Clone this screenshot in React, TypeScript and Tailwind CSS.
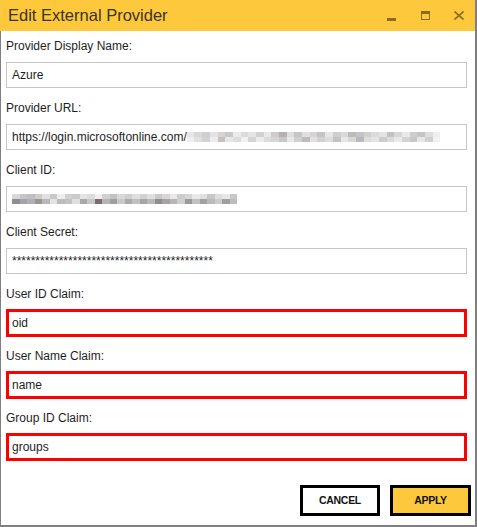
import React from "react";

const URL_BLUR = [
  ["#e6e6e6", "#d8d8d8", "#cfcfd2", "#e2e2e2", "#d6d3d3", "#c9c9cc", "#ebebeb", "#dcdcdc", "#e4e4e4", "#d0d0d0", "#e8e8e8", "#cccccc", "#b6b0b0", "#dedede", "#c6c6c9", "#e0e0e0", "#d4d4d4", "#c8c2c2", "#e6e6e6", "#cfcfcf", "#d9d9d9", "#bcbcbc", "#c4c4c9", "#d0d0d0", "#dadada", "#e3e3e3", "#c2c2c5", "#d7d7d7", "#e9e9e9", "#cdcdcd", "#c5c5c5", "#dddddd", "#eeeeee"],
  ["#efefef", "#e0e0e0", "#d3d3d6", "#ececec", "#c8c0c0", "#e6e6e6", "#dcdcdc", "#f0f0f0", "#d4d4d4", "#ebebeb", "#dcdcdc", "#d7d4d4", "#c8c8cb", "#e8e8e8", "#d0d0d0", "#c0baba", "#e1e1e1", "#d2d2d2", "#dddddd", "#c3c3c6", "#e7e7e7", "#d8d8d8", "#b9b9bd", "#dddddd", "#e4e4e4", "#cccccc", "#dbdbdb", "#eaeaea", "#d3d3d3", "#c8c8cc", "#e6e6e6", "#d1d1d1", "#f2f2f2"],
];

const ID_BLUR = [
  ["#d8d8dc", "#c5c5c8", "#bfbfc2", "#cdcdcd", "#e0e0e0", "#c9c9c9", "#eeeeee", "#d0d0d4", "#cacaca", "#e4e4e4", "#dcdcdc", "#eeeeee", "#cfcfd4", "#c6c1c1", "#d9d9d9", "#cfcfcf", "#e3dede", "#d2d2d2", "#dfdfdf", "#c9c9c9", "#d7d7d7", "#e9e9e9", "#cccccc", "#d6d6d6", "#e8e8e8", "#dfdfdf", "#c6c6c6", "#dddddd", "#e7e7e7", "#c8c8c8"],
  ["#8d8d95", "#a3a3a8", "#b0b0b4", "#9b9790", "#b8b8bc", "#e3e3e3", "#bcbcbc", "#c3c3c3", "#e0e0e0", "#a8a8a8", "#c7c7cb", "#7a6d6d", "#b4b4ba", "#a0a0a0", "#c9c9cc", "#ababae", "#c0c0c0", "#a6a6a6", "#b9b9b9", "#8e8e8e", "#a9a2a2", "#b7b7b7", "#cfcfcf", "#9b9b9f", "#c1c1c1", "#a0a0a5", "#b9b9b9", "#cbcbcb", "#9d9da2", "#bcbcbc"],
];

function Blur({ rows, cell }: { rows: string[][]; cell: number }) {
  return (
    <span className="inline-flex shrink-0 flex-col align-middle">
      {rows.map((row, i) => (
        <span key={i} className="flex">
          {row.map((c, j) => (
            <span key={j} className="shrink-0" style={{ backgroundColor: c, width: cell, height: 5 }} />
          ))}
        </span>
      ))}
    </span>
  );
}

function Field({ label, children, highlight = false }: { label: string; children: React.ReactNode; highlight?: boolean }) {
  return (
    <div className="flex flex-col">
      <div className="h-4 leading-4 text-[12px] text-[#1e1e1e]">{label}</div>
      {highlight ? (
        <div className="mt-[7px] -mb-[1px] flex h-[28px] items-center border-[3px] border-[#ff0000] bg-white pl-[3px] text-[12px] text-[#1e1e1e]">
          {children}
        </div>
      ) : (
        <div className="mt-2 flex h-[26px] items-center overflow-hidden border border-[#c6c6c6] bg-white pl-[5px] text-[12px] text-[#1e1e1e]">
          {children}
        </div>
      )}
    </div>
  );
}

export default function App() {
  return (
    <div className="flex h-[527px] w-[477px] flex-col bg-white" style={{ fontFamily: '"Liberation Sans", Arial, sans-serif' }}>
      <div className="flex h-[31px] shrink-0 items-center border-r-2 border-[#7f7f7f] bg-[#fec83c] pl-2">
        <span className="text-[16.5px] leading-none text-[#3a3520]">Edit External Provider</span>
        <div className="ml-auto flex items-center">
          <div className="mr-[25px] mt-[7px] h-[3px] w-[9px] bg-[#8a6c1e]" />
          <div className="mr-[24px] h-[9px] w-[9px] border border-t-[3px] border-[#8a6c1e]" />
          <svg width="10" height="9" viewBox="0 0 10 9" className="mr-[11px]">
            <path d="M0.5 0.5 L9.5 8.5 M9.5 0.5 L0.5 8.5" stroke="#8a6c1e" strokeWidth="1.6" />
          </svg>
        </div>
      </div>
      <div className="flex flex-1 flex-col border-b-2 border-l border-r-2 border-[#7f7f7f] pl-[5px] pr-[8px] pt-[7px]">
        <div className="flex flex-col gap-3">
          <Field label="Provider Display Name:">Azure</Field>
          <Field label="Provider URL:">
            <span className="shrink-0">https://login.microsoftonline.com/</span>
            <Blur rows={URL_BLUR} cell={7.7} />
          </Field>
          <Field label="Client ID:">
            <Blur rows={ID_BLUR} cell={7.5} />
          </Field>
          <Field label="Client Secret:">
            <span className="text-[12px]">*******************************************</span>
          </Field>
          <Field label="User ID Claim:" highlight>oid</Field>
          <Field label="User Name Claim:" highlight>name</Field>
          <Field label="Group ID Claim:" highlight>groups</Field>
        </div>
        <div className="mt-auto mb-[9px] flex justify-end gap-[10px]">
          <button className="h-[31px] w-[80px] border-[3px] border-black bg-white text-[10.5px] font-bold tracking-[-0.3px] text-[#111]">CANCEL</button>
          <button className="-mr-[4px] h-[31px] w-[81px] border-[3px] border-black bg-[#fec83c] text-[10.5px] font-bold tracking-[-0.3px] text-[#111]">APPLY</button>
        </div>
      </div>
    </div>
  );
}
